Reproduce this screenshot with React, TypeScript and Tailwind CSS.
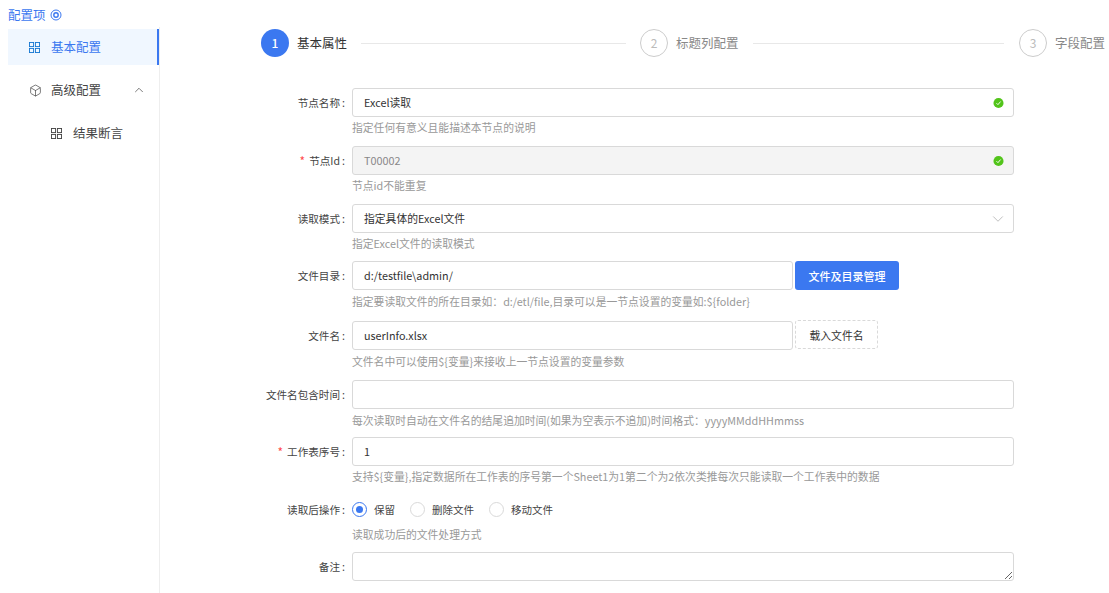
import { Box, ChevronDown, ChevronUp } from "lucide-react";
import type { ReactNode } from "react";

function GridIcon({ className }: { className: string }) {
  return (
    <svg viewBox="0 0 12 12" fill="none" stroke="currentColor" strokeWidth="1" className={className}>
      <rect x="0.5" y="0.5" width="4.5" height="4.5" />
      <rect x="7" y="0.5" width="4.5" height="4.5" />
      <rect x="0.5" y="7" width="4.5" height="4.5" />
      <rect x="7" y="7" width="4.5" height="4.5" />
    </svg>
  );
}

function CheckDot() {
  return (
    <svg viewBox="0 0 12 12" className="w-[11px] h-[11px] absolute right-[9px] top-1/2 -translate-y-1/2">
      <circle cx="6" cy="6" r="5.5" fill="#52c41a" />
      <path d="M3.8 6.2 5.4 7.8 8.3 4.4" fill="none" stroke="#fff" strokeWidth="1" />
    </svg>
  );
}

function Row({
  label,
  required,
  help,
  helpClass = "mt-[2px] mb-[2px]",
  className,
  children,
}: {
  label: string;
  required?: boolean;
  help?: string;
  helpClass?: string;
  className: string;
  children: ReactNode;
}) {
  return (
    <div className={`flex ${className}`}>
      <div className="w-[352px] shrink-0 h-[29px] flex items-center justify-end pr-[7px] text-[10.6px] text-[#444]">
        {required && <span className="text-[#ff4d4f] mr-[4px] text-[12px]">*</span>}
        <span>{label}</span>
        <span className="ml-[2px]">:</span>
      </div>
      <div className="flex-1 min-w-0">
        {children}
        {help && <div className={`text-[10.8px] leading-[16px] text-[#999] whitespace-nowrap ${helpClass}`}>{help}</div>}
      </div>
    </div>
  );
}

const inputBox = "h-[29px] border border-[#d9d9d9] rounded-[3px] flex items-center pl-[11px] text-[10.8px] text-[#333]";

function Step({ n, title, active }: { n: number; title: string; active?: boolean }) {
  return (
    <div className="flex items-center shrink-0">
      <div
        className={
          active
            ? "w-[28px] h-[28px] rounded-full bg-[#3b78f0] text-white text-[12px] flex items-center justify-center font-medium"
            : "w-[28px] h-[28px] rounded-full border border-[#cccccc] text-[#bbb] text-[12px] flex items-center justify-center"
        }
      >
        {n}
      </div>
      <span className={active ? "ml-[8px] text-[12.5px] text-[#333]" : "ml-[8px] text-[12.5px] text-[#888]"}>{title}</span>
    </div>
  );
}

function Radio({ label, checked }: { label: string; checked?: boolean }) {
  return (
    <div className="flex items-center mr-[15px]">
      <span
        className={
          checked
            ? "w-[15px] h-[15px] rounded-full border border-[#3b78f0] flex items-center justify-center"
            : "w-[15px] h-[15px] rounded-full border border-[#d9d9d9]"
        }
      >
        {checked && <span className="w-[7px] h-[7px] rounded-full bg-[#3b78f0]" />}
      </span>
      <span className="ml-[7px] text-[10.5px] text-[#444]">{label}</span>
    </div>
  );
}

export default function App() {
  return (
    <div
      className="w-[1109px] h-[593px] overflow-hidden bg-white relative"
      style={{ fontFamily: '"Noto Sans CJK SC", "Noto Sans", sans-serif' }}
    >
      <div className="flex h-full">
        {/* Sidebar */}
        <div className="w-[160px] shrink-0 pt-[7px] pl-[8px]">
          <div className="flex items-center text-[12.5px] leading-[16px] text-[#3b78f0]">
            配置项
            <svg viewBox="0 0 12 12" fill="none" stroke="currentColor" className="w-[12px] h-[12px] ml-[4px]">
              <circle cx="6" cy="6" r="5" />
              <circle cx="6" cy="6" r="2.2" strokeWidth="1.4" />
            </svg>
          </div>
          <div className="border-r border-[#eeeeee] h-[570px] mt-[2px]">
            <div className="h-[36px] mt-[4px] relative top-[2px] bg-[#f0f7ff] border-r-2 border-[#3b78f0] flex items-center pl-[21px] text-[12.5px] text-[#3b78f0]">
              <GridIcon className="w-[11px] h-[11px] text-[#1677d2] mr-[11px]" />
              基本配置
            </div>
            <div className="h-[36px] mt-[9px] flex items-center pl-[21px] text-[12.5px] text-[#444]">
              <Box size={13} strokeWidth={1.3} className="mr-[9px]" />
              高级配置
              <ChevronUp size={14} strokeWidth={1.2} className="ml-[31px]" />
            </div>
            <div className="h-[36px] mt-[7px] flex items-center pl-[43px] text-[12.5px] text-[#444]">
              <GridIcon className="w-[11px] h-[11px] mr-[11px]" />
              结果断言
            </div>
          </div>
        </div>

        {/* Main */}
        <div className="flex-1 min-w-0">
          <div className="flex items-center h-[28px] mt-[29px] ml-[101px] w-[844px]">
            <Step n={1} title="基本属性" active />
            <div className="w-[265px] h-px bg-[#e8e8e8] mx-[14px]" />
            <Step n={2} title="标题列配置" />
            <div className="flex-1 h-px bg-[#e8e8e8] ml-[14px] mr-[15px]" />
            <Step n={3} title="字段配置" />
          </div>

          <div className="-ml-[160px] w-[1014px] pt-[31px]">
            <Row label="节点名称" help="指定任何有意义且能描述本节点的说明" className="">
              <div className={`${inputBox} relative`}>
                Excel读取
                <CheckDot />
              </div>
            </Row>
            <Row label="节点Id" required help="节点id不能重复" className="mt-[9px]">
              <div className={`${inputBox} relative bg-[#f4f4f4] text-[#888]`}>
                T00002
                <CheckDot />
              </div>
            </Row>
            <Row label="读取模式" help="指定Excel文件的读取模式" className="mt-[9px]">
              <div className={`${inputBox} relative`}>
                指定具体的Excel文件
                <ChevronDown size={18} strokeWidth={1} className="absolute right-[6px] text-[#aaa]" />
              </div>
            </Row>
            <Row
              label="文件目录"
              help="指定要读取文件的所在目录如：d:/etl/file,目录可以是一节点设置的变量如:${folder}"
              helpClass="mt-[3px] mb-px"
              className="mt-[8px]"
            >
              <div className="flex">
                <div className={`${inputBox} w-[441px]`}>d:/testfile\admin/</div>
                <button className="ml-[2px] w-[104px] h-[29px] pt-px rounded-[3px] bg-[#3b78f0] text-white text-[11px] font-medium">
                  文件及目录管理
                </button>
              </div>
            </Row>
            <Row
              label="文件名"
              help="文件名中可以使用${变量}来接收上一节点设置的变量参数"
              helpClass="mt-[3px] mb-px"
              className="mt-[11px]"
            >
              <div className="flex">
                <div className={`${inputBox} w-[441px]`}>userInfo.xlsx</div>
                <button className="ml-[2px] -mt-px w-[83px] h-[29px] pt-px rounded-[3px] border border-dashed border-[#d9d9d9] text-[#333] text-[10.8px]">
                  载入文件名
                </button>
              </div>
            </Row>
            <Row
              label="文件名包含时间"
              help="每次读取时自动在文件名的结尾追加时间(如果为空表示不追加)时间格式：yyyyMMddHHmmss"
              helpClass="mt-[3px] mb-px"
              className="mt-[10px]"
            >
              <div className={inputBox} />
            </Row>
            <Row label="工作表序号" required help="支持${变量},指定数据所在工作表的序号第一个Sheet1为1第二个为2依次类推每次只能读取一个工作表中的数据" className="mt-[8px]">
              <div className={inputBox}>1</div>
            </Row>
            <Row label="读取后操作" help="读取成功后的文件处理方式" className="mt-[9px]">
              <div className="flex items-center h-[29px]">
                <Radio label="保留" checked />
                <Radio label="删除文件" />
                <Radio label="移动文件" />
              </div>
            </Row>
            <Row label="备注" className="mt-[8px]">
              <textarea className="block w-full h-[29px] border border-[#d9d9d9] rounded-[3px]" />
            </Row>
          </div>
        </div>
      </div>
    </div>
  );
}
